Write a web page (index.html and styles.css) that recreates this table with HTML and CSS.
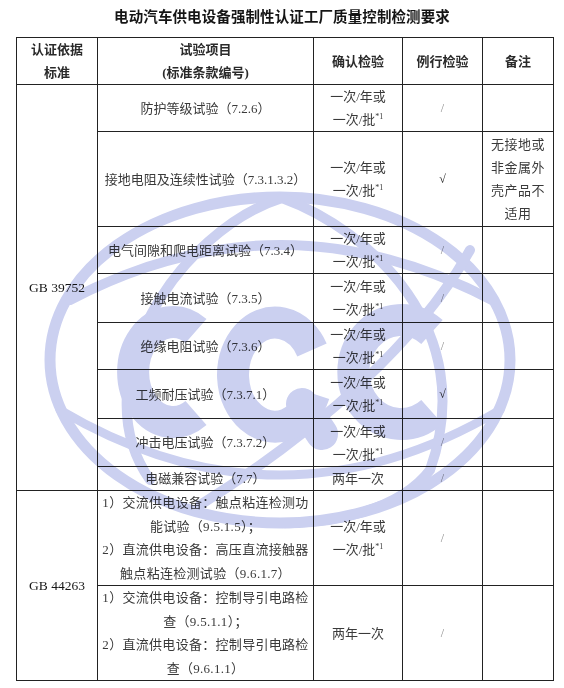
FILE: index.html
```html
<!DOCTYPE html>
<html lang="zh-CN">
<head>
<meta charset="utf-8">
<title>电动汽车供电设备强制性认证工厂质量控制检测要求</title>
<link rel="stylesheet" href="styles.css">
</head>
<body>
<div class="page">
  <h1 class="title">电动汽车供电设备强制性认证工厂质量控制检测要求</h1>
  <table class="grid">
    <colgroup>
      <col class="c1"><col class="c2"><col class="c3"><col class="c4"><col class="c5">
    </colgroup>
    <thead>
      <tr class="h47">
        <th>认证依据<br>标准</th>
        <th>试验项目<br>(标准条款编号)</th>
        <th>确认检验</th>
        <th>例行检验</th>
        <th>备注</th>
      </tr>
    </thead>
    <tbody>
      <tr class="h47">
        <td class="std" rowspan="8">GB 39752</td>
        <td>防护等级试验（7.2.6）</td>
        <td>一次/年或<br>一次/批<sup>*1</sup></td>
        <td class="na">/</td>
        <td></td>
      </tr>
      <tr class="h95">
        <td>接地电阻及连续性试验（7.3.1.3.2）</td>
        <td>一次/年或<br>一次/批<sup>*1</sup></td>
        <td class="ok">√</td>
        <td class="note">无接地或非金属外壳产品不适用</td>
      </tr>
      <tr class="h46">
        <td>电气间隙和爬电距离试验（7.3.4）</td>
        <td>一次/年或<br>一次/批<sup>*1</sup></td>
        <td class="na">/</td>
        <td></td>
      </tr>
      <tr class="h49">
        <td>接触电流试验（7.3.5）</td>
        <td>一次/年或<br>一次/批<sup>*1</sup></td>
        <td class="na">/</td>
        <td></td>
      </tr>
      <tr class="h46">
        <td>绝缘电阻试验（7.3.6）</td>
        <td>一次/年或<br>一次/批<sup>*1</sup></td>
        <td class="na">/</td>
        <td></td>
      </tr>
      <tr class="h49">
        <td>工频耐压试验（7.3.7.1）</td>
        <td>一次/年或<br>一次/批<sup>*1</sup></td>
        <td class="ok">√</td>
        <td></td>
      </tr>
      <tr class="h48">
        <td>冲击电压试验（7.3.7.2）</td>
        <td>一次/年或<br>一次/批<sup>*1</sup></td>
        <td class="na">/</td>
        <td></td>
      </tr>
      <tr class="h24">
        <td>电磁兼容试验（7.7）</td>
        <td>两年一次</td>
        <td class="na">/</td>
        <td></td>
      </tr>
      <tr class="h95">
        <td class="std" rowspan="2">GB 44263</td>
        <td class="items">
          <p>1）交流供电设备：触点粘连检测功能试验（9.5.1.5）；</p>
          <p>2）直流供电设备：高压直流接触器触点粘连检测试验（9.6.1.7）</p>
        </td>
        <td>一次/年或<br>一次/批<sup>*1</sup></td>
        <td class="na">/</td>
        <td></td>
      </tr>
      <tr class="h95">
        <td class="items">
          <p>1）交流供电设备：控制导引电路检查（9.5.1.1）；</p>
          <p>2）直流供电设备：控制导引电路检查（9.6.1.1）</p>
        </td>
        <td>两年一次</td>
        <td class="na">/</td>
        <td></td>
      </tr>
    </tbody>
  </table>

  <svg class="watermark" width="564" height="688" viewBox="0 0 564 688" aria-hidden="true">
    <g fill="none" stroke="#cbd0f0" stroke-linecap="round">
      <ellipse cx="280" cy="360" rx="230" ry="163" stroke-width="11"/>
      <path d="M70 300 Q280 190 492 300" stroke-width="10"/>
      <path d="M282 198 C180 230 80 380 150 480" stroke-width="10"/>
      <path d="M282 198 C370 230 480 330 430 470 C400 510 330 525 280 523" stroke-width="10"/>
      <path d="M470 250 C420 340 320 430 200 505" stroke-width="10"/>
      <path d="M60 410 Q280 540 500 410" stroke-width="9"/>
    </g>
    <g fill="none" stroke="#cbd0f0" stroke-width="32">
      <path d="M196 331 A40 50 0 1 0 196 413"/>
      <path d="M314 394 A42 52 0 1 1 312 350"/>
      <path d="M302 404 L322 434" stroke-linecap="round"/>
      <path d="M432 332 A48 52 0 1 0 432 412"/>
    </g>
  </svg>
</div>
</body>
</html>
```

FILE: styles.css
```css
html, body {
  margin: 0;
  padding: 0;
  background: #ffffff;
}

.page {
  position: relative;
  width: 564px;
  height: 688px;
  overflow: hidden;
  font-family: "Liberation Serif", "Noto Sans CJK SC", serif;
  color: #3a3a3a;
}

.title {
  margin: 7px 0 0 0;
  font-size: 14.5px;
  line-height: 20px;
  font-weight: bold;
  text-align: center;
  color: #151515;
  letter-spacing: 0.1px;
}

.grid {
  margin: 10px 0 0 16px;
  width: 537px;
  border-collapse: collapse;
  table-layout: fixed;
  font-size: 13px;
  line-height: 23px;
}

.c1 { width: 81px; }
.c2 { width: 216px; }
.c3 { width: 89px; }
.c4 { width: 80px; }
.c5 { width: 71px; }

.grid th,
.grid td {
  border: 1px solid #222;
  padding: 0 4px;
  text-align: center;
  vertical-align: middle;
  overflow: visible;
}

.grid th {
  font-weight: bold;
  color: #2a2a2a;
}

.h47 { height: 47px; }
.h95 { height: 95px; }
.h46 { height: 46px; }
.h49 { height: 49px; }
.h48 { height: 48px; }
.h24 { height: 24px; }

.std {
  color: #151515;
  font-size: 13.5px;
}

.na {
  color: #8a8a8a;
  font-size: 12px;
}

.ok {
  color: #222;
  font-weight: bold;
  font-size: 12px;
}

.note {
  padding: 0 8px;
  letter-spacing: 0.5px;
}

.items {
  padding: 0 3px;
}

.items p {
  margin: 0;
  line-height: 23.5px;
  letter-spacing: 0.3px;
}

sup {
  font-size: 8px;
  line-height: 0;
  vertical-align: 5px;
}

.watermark {
  position: absolute;
  top: 0;
  left: 0;
  pointer-events: none;
  mix-blend-mode: multiply;
}
```
